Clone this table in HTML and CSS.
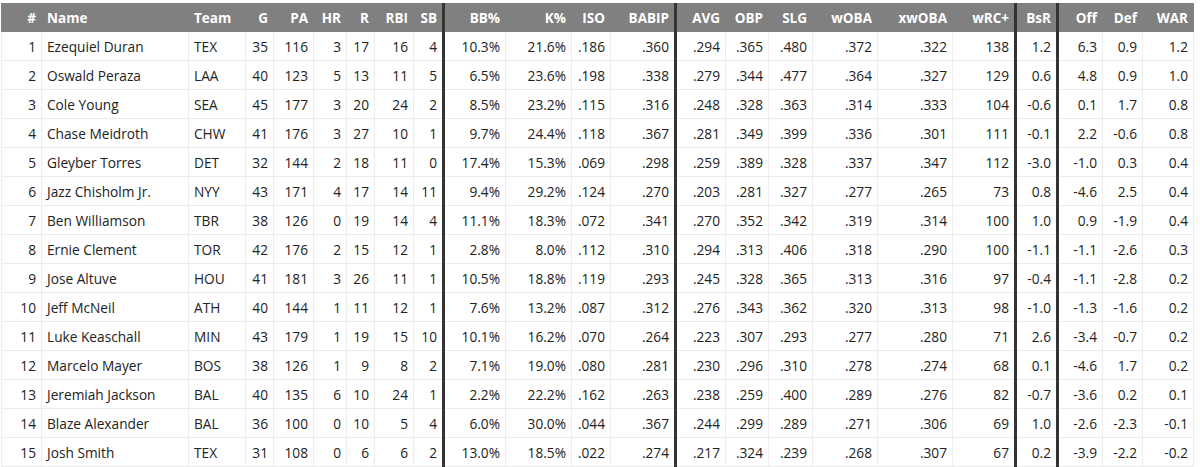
FILE: index.html
```html
<!DOCTYPE html>
<html>
<head>
<meta charset="utf-8">
<link rel="stylesheet" href="styles.css">
</head>
<body>
<div class="wrap">
<table class="stats">
<colgroup>
<col style="width:40px"><col style="width:147px"><col style="width:57px"><col style="width:28px"><col style="width:40px"><col style="width:33px"><col style="width:28px"><col style="width:39px"><col style="width:30px"><col style="width:62px"><col style="width:66px"><col style="width:39px"><col style="width:65px"><col style="width:50px"><col style="width:43px"><col style="width:44px"><col style="width:65px"><col style="width:75px"><col style="width:63px"><col style="width:42px"><col style="width:45px"><col style="width:40px"><col style="width:51px">
</colgroup>
<thead>
<tr><th>#</th><th class="l">Name</th><th class="l">Team</th><th>G</th><th>PA</th><th>HR</th><th>R</th><th>RBI</th><th class="sep">SB</th><th>BB%</th><th>K%</th><th>ISO</th><th class="sep">BABIP</th><th>AVG</th><th>OBP</th><th>SLG</th><th>wOBA</th><th>xwOBA</th><th class="sep">wRC+</th><th class="sep">BsR</th><th>Off</th><th>Def</th><th>WAR</th></tr>
</thead>
<tbody>
<tr><td>1</td><td class="l">Ezequiel Duran</td><td class="l">TEX</td><td>35</td><td>116</td><td>3</td><td>17</td><td>16</td><td class="sep">4</td><td>10.3%</td><td>21.6%</td><td>.186</td><td class="sep">.360</td><td>.294</td><td>.365</td><td>.480</td><td>.372</td><td>.322</td><td class="sep">138</td><td class="sep">1.2</td><td>6.3</td><td>0.9</td><td>1.2</td></tr>
<tr><td>2</td><td class="l">Oswald Peraza</td><td class="l">LAA</td><td>40</td><td>123</td><td>5</td><td>13</td><td>11</td><td class="sep">5</td><td>6.5%</td><td>23.6%</td><td>.198</td><td class="sep">.338</td><td>.279</td><td>.344</td><td>.477</td><td>.364</td><td>.327</td><td class="sep">129</td><td class="sep">0.6</td><td>4.8</td><td>0.9</td><td>1.0</td></tr>
<tr><td>3</td><td class="l">Cole Young</td><td class="l">SEA</td><td>45</td><td>177</td><td>3</td><td>20</td><td>24</td><td class="sep">2</td><td>8.5%</td><td>23.2%</td><td>.115</td><td class="sep">.316</td><td>.248</td><td>.328</td><td>.363</td><td>.314</td><td>.333</td><td class="sep">104</td><td class="sep">-0.6</td><td>0.1</td><td>1.7</td><td>0.8</td></tr>
<tr><td>4</td><td class="l">Chase Meidroth</td><td class="l">CHW</td><td>41</td><td>176</td><td>3</td><td>27</td><td>10</td><td class="sep">1</td><td>9.7%</td><td>24.4%</td><td>.118</td><td class="sep">.367</td><td>.281</td><td>.349</td><td>.399</td><td>.336</td><td>.301</td><td class="sep">111</td><td class="sep">-0.1</td><td>2.2</td><td>-0.6</td><td>0.8</td></tr>
<tr><td>5</td><td class="l">Gleyber Torres</td><td class="l">DET</td><td>32</td><td>144</td><td>2</td><td>18</td><td>11</td><td class="sep">0</td><td>17.4%</td><td>15.3%</td><td>.069</td><td class="sep">.298</td><td>.259</td><td>.389</td><td>.328</td><td>.337</td><td>.347</td><td class="sep">112</td><td class="sep">-3.0</td><td>-1.0</td><td>0.3</td><td>0.4</td></tr>
<tr><td>6</td><td class="l">Jazz Chisholm Jr.</td><td class="l">NYY</td><td>43</td><td>171</td><td>4</td><td>17</td><td>14</td><td class="sep">11</td><td>9.4%</td><td>29.2%</td><td>.124</td><td class="sep">.270</td><td>.203</td><td>.281</td><td>.327</td><td>.277</td><td>.265</td><td class="sep">73</td><td class="sep">0.8</td><td>-4.6</td><td>2.5</td><td>0.4</td></tr>
<tr><td>7</td><td class="l">Ben Williamson</td><td class="l">TBR</td><td>38</td><td>126</td><td>0</td><td>19</td><td>14</td><td class="sep">4</td><td>11.1%</td><td>18.3%</td><td>.072</td><td class="sep">.341</td><td>.270</td><td>.352</td><td>.342</td><td>.319</td><td>.314</td><td class="sep">100</td><td class="sep">1.0</td><td>0.9</td><td>-1.9</td><td>0.4</td></tr>
<tr><td>8</td><td class="l">Ernie Clement</td><td class="l">TOR</td><td>42</td><td>176</td><td>2</td><td>15</td><td>12</td><td class="sep">1</td><td>2.8%</td><td>8.0%</td><td>.112</td><td class="sep">.310</td><td>.294</td><td>.313</td><td>.406</td><td>.318</td><td>.290</td><td class="sep">100</td><td class="sep">-1.1</td><td>-1.1</td><td>-2.6</td><td>0.3</td></tr>
<tr><td>9</td><td class="l">Jose Altuve</td><td class="l">HOU</td><td>41</td><td>181</td><td>3</td><td>26</td><td>11</td><td class="sep">1</td><td>10.5%</td><td>18.8%</td><td>.119</td><td class="sep">.293</td><td>.245</td><td>.328</td><td>.365</td><td>.313</td><td>.316</td><td class="sep">97</td><td class="sep">-0.4</td><td>-1.1</td><td>-2.8</td><td>0.2</td></tr>
<tr><td>10</td><td class="l">Jeff McNeil</td><td class="l">ATH</td><td>40</td><td>144</td><td>1</td><td>11</td><td>12</td><td class="sep">1</td><td>7.6%</td><td>13.2%</td><td>.087</td><td class="sep">.312</td><td>.276</td><td>.343</td><td>.362</td><td>.320</td><td>.313</td><td class="sep">98</td><td class="sep">-1.0</td><td>-1.3</td><td>-1.6</td><td>0.2</td></tr>
<tr><td>11</td><td class="l">Luke Keaschall</td><td class="l">MIN</td><td>43</td><td>179</td><td>1</td><td>19</td><td>15</td><td class="sep">10</td><td>10.1%</td><td>16.2%</td><td>.070</td><td class="sep">.264</td><td>.223</td><td>.307</td><td>.293</td><td>.277</td><td>.280</td><td class="sep">71</td><td class="sep">2.6</td><td>-3.4</td><td>-0.7</td><td>0.2</td></tr>
<tr><td>12</td><td class="l">Marcelo Mayer</td><td class="l">BOS</td><td>38</td><td>126</td><td>1</td><td>9</td><td>8</td><td class="sep">2</td><td>7.1%</td><td>19.0%</td><td>.080</td><td class="sep">.281</td><td>.230</td><td>.296</td><td>.310</td><td>.278</td><td>.274</td><td class="sep">68</td><td class="sep">0.1</td><td>-4.6</td><td>1.7</td><td>0.2</td></tr>
<tr><td>13</td><td class="l">Jeremiah Jackson</td><td class="l">BAL</td><td>40</td><td>135</td><td>6</td><td>10</td><td>24</td><td class="sep">1</td><td>2.2%</td><td>22.2%</td><td>.162</td><td class="sep">.263</td><td>.238</td><td>.259</td><td>.400</td><td>.289</td><td>.276</td><td class="sep">82</td><td class="sep">-0.7</td><td>-3.6</td><td>0.2</td><td>0.1</td></tr>
<tr><td>14</td><td class="l">Blaze Alexander</td><td class="l">BAL</td><td>36</td><td>100</td><td>0</td><td>10</td><td>5</td><td class="sep">4</td><td>6.0%</td><td>30.0%</td><td>.044</td><td class="sep">.367</td><td>.244</td><td>.299</td><td>.289</td><td>.271</td><td>.306</td><td class="sep">69</td><td class="sep">1.0</td><td>-2.6</td><td>-2.3</td><td>-0.1</td></tr>
<tr><td>15</td><td class="l">Josh Smith</td><td class="l">TEX</td><td>31</td><td>108</td><td>0</td><td>6</td><td>6</td><td class="sep">2</td><td>13.0%</td><td>18.5%</td><td>.022</td><td class="sep">.274</td><td>.217</td><td>.324</td><td>.239</td><td>.268</td><td>.307</td><td class="sep">67</td><td class="sep">0.2</td><td>-3.9</td><td>-2.2</td><td>-0.2</td></tr>
</tbody>
</table>
</div>
</body>
</html>
```
FILE: styles.css
```css
html, body {
  margin: 0;
  padding: 0;
  background: #fff;
}
.wrap {
  padding: 3px 0 0 1px;
}
.stats {
  table-layout: fixed;
  width: 1192px;
  border-collapse: collapse;
  font-family: "Open Sans", "Noto Sans", sans-serif;
  font-size: 13.7px;
  color: #222;
}
.stats th {
  background: #808080;
  color: #fff;
  font-weight: 700;
  font-size: 13.5px;
  height: 28px;
  padding: 0 5px;
  text-align: right;
  white-space: nowrap;
  border: 1px solid #808080;
  box-sizing: border-box;
}
.stats td {
  height: 27px;
  padding: 1px 5px 0;
  text-align: right;
  white-space: nowrap;
  border: 1px solid #ececec;
}
.stats .l {
  text-align: left;
}
.stats th.sep,
.stats td.sep {
  border-right: 3px solid #333;
}
```
